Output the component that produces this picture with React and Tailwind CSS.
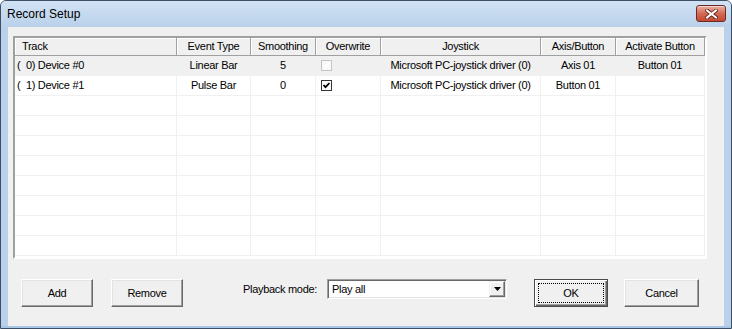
import React from "react";

const colW = ["w-[162px]", "w-[74px]", "w-[65px]", "w-[65px]", "w-[160px]", "w-[75px]", "w-[89px]"];
const headers = ["Track", "Event Type", "Smoothing", "Overwrite", "Joystick", "Axis/Button", "Activate Button"];

function Check({ checked, disabled }) {
  if (disabled) {
    return (
      <div className="w-[11px] h-[11px] border border-[#c4c4c4] bg-[#f8f8f8] flex items-center justify-center">
        <svg width="9" height="9" viewBox="0 0 9 9">
          <polyline points="1.5,4 3.5,6.2 7.5,2" fill="none" stroke="#ffffff" strokeWidth="1.8" />
        </svg>
      </div>
    );
  }
  return (
    <div className="w-[11px] h-[11px] border border-[#333333] bg-white flex items-center justify-center">
      {checked && (
        <svg width="9" height="9" viewBox="0 0 9 9">
          <polyline points="1.5,4 3.5,6.2 7.5,2" fill="none" stroke="#000000" strokeWidth="1.8" />
        </svg>
      )}
    </div>
  );
}

const rows = [
  { bg: "bg-[#f0f0f0]", cells: ["(  0) Device #0", "Linear Bar", "5", { cb: true, disabled: true }, "Microsoft PC-joystick driver (0)", "Axis 01", "Button 01"] },
  { bg: "bg-white", cells: ["(  1) Device #1", "Pulse Bar", "0", { cb: true, checked: true }, "Microsoft PC-joystick driver (0)", "Button 01", ""] },
];

function Btn({ children, className }) {
  return (
    <div
      className={
        "flex items-center justify-center h-[28px] bg-[#f0f0f0] border border-t-white border-l-white border-r-[#696969] border-b-[#696969] shadow-[inset_-1px_-1px_0_#a0a0a0,inset_1px_1px_0_#e3e3e3] " +
        className
      }
    >
      {children}
    </div>
  );
}

export default function App() {
  const emptyRows = Array.from({ length: 8 });
  return (
    <div className="w-[732px] h-[329px] flex flex-col border border-[#3d4f66] rounded-t-[6px] bg-[#b9d1ea] overflow-hidden font-['Liberation_Sans',Arial,sans-serif] text-black">
      {/* Title bar */}
      <div className="h-[26px] flex items-start justify-between bg-gradient-to-b from-[#d2e2f4] to-[#b9d1ea]">
        <span className="pl-[6px] leading-[26px] text-[12px]">Record Setup</span>
        <div className="mt-[4px] mr-[5px] w-[30px] h-[17px] rounded-[3px] border border-[#6b2a22] bg-gradient-to-b from-[#eab0a4] via-[#d46a55] to-[#c4472f] flex items-center justify-center shadow-[inset_0_1px_0_rgba(255,255,255,0.5)]">
          <svg width="13" height="10" viewBox="0 0 13 10">
            <path d="M2 1.5 L11 8.5 M11 1.5 L2 8.5" stroke="#5a1c14" strokeWidth="3.6" strokeLinecap="square" />
            <path d="M2 1.5 L11 8.5 M11 1.5 L2 8.5" stroke="#ffffff" strokeWidth="2" strokeLinecap="square" />
          </svg>
        </div>
      </div>

      {/* Client */}
      <div className="flex-1 px-[7px]">
        <div className="h-full bg-[#f0f0f0] flex flex-col pt-[9px] pl-[5px] text-[11px] tracking-[-0.3px]">
          {/* List view */}
          <div className="w-[694px] h-[223px] flex flex-col border-2 border-t-[#a0a0a0] border-l-[#a0a0a0] border-r-white border-b-white shadow-[inset_1px_1px_0_#696969,inset_-1px_-1px_0_#e3e3e3] bg-white">
            <div className="flex h-[18px] bg-[#f0f0f0]">
              {headers.map((h, i) => (
                <div
                  key={h}
                  className={
                    colW[i] +
                    " h-[18px] flex items-center border-r border-b border-r-[#a0a0a0] border-b-[#a0a0a0] shadow-[inset_1px_1px_0_#ffffff] " +
                    (i === 0 ? "justify-start pl-[7px]" : "justify-center")
                  }
                >
                  {h}
                </div>
              ))}
            </div>
            <div className="flex-1 overflow-hidden bg-white">
              {rows.map((r, ri) => (
                <div key={ri} className={"flex h-[20px] border-b border-[#f0f0f0] " + r.bg}>
                  {r.cells.map((c, ci) => (
                    <div
                      key={ci}
                      className={
                        colW[ci] +
                        " h-full flex items-center border-r border-[#f0f0f0] whitespace-pre " +
                        (ci === 0 ? "justify-start pl-[2px]" : ci === 3 ? "justify-start pl-[5px]" : "justify-center")
                      }
                    >
                      {typeof c === "object" ? <Check checked={c.checked} disabled={c.disabled} /> : c}
                    </div>
                  ))}
                </div>
              ))}
              {emptyRows.map((_, ri) => (
                <div key={"e" + ri} className="flex h-[20px] border-b border-[#f0f0f0]">
                  {colW.map((w, ci) => (
                    <div key={ci} className={w + " h-full border-r border-[#f0f0f0]"} />
                  ))}
                </div>
              ))}
            </div>
          </div>

          {/* Bottom controls */}
          <div className="flex items-start mt-[20px] -ml-[5px]">
            <Btn className="ml-[13px] w-[72px]">Add</Btn>
            <Btn className="ml-[18px] w-[72px]">Remove</Btn>
            <span className="ml-[60px] w-[84px] h-[20px] leading-[20px]">Playback mode:</span>
            <div className="w-[180px] h-[20px] flex bg-white border border-t-[#a0a0a0] border-l-[#a0a0a0] border-r-white border-b-white shadow-[inset_1px_1px_0_#696969,inset_-1px_-1px_0_#e3e3e3]">
              <span className="flex-1 pl-[4px] leading-[18px]">Play all</span>
              <div className="w-[16px] h-[16px] mt-[1px] mr-[1px] bg-[#f0f0f0] border border-t-[#f0f0f0] border-l-[#f0f0f0] border-r-[#696969] border-b-[#696969] shadow-[inset_-1px_-1px_0_#a0a0a0,inset_1px_1px_0_#ffffff] flex items-center justify-center">
                <svg width="7" height="4" viewBox="0 0 7 4">
                  <polygon points="0,0 7,0 3.5,4" fill="#000000" />
                </svg>
              </div>
            </div>
            <div className="ml-[27px] w-[74px] h-[28px] flex items-center justify-center bg-[#f0f0f0] border border-[#4a4a4a] shadow-[inset_1px_1px_0_#ffffff,inset_-1px_-1px_0_#696969,inset_-2px_-2px_0_#a0a0a0] outline-1 outline-dotted outline-black -outline-offset-5">
              OK
            </div>
            <Btn className="ml-[16px] w-[75px] h-[27px]">Cancel</Btn>
          </div>
        </div>
      </div>

      {/* Bottom frame */}
      <div className="h-[2px] bg-[#a9c6e6]" />
    </div>
  );
}
